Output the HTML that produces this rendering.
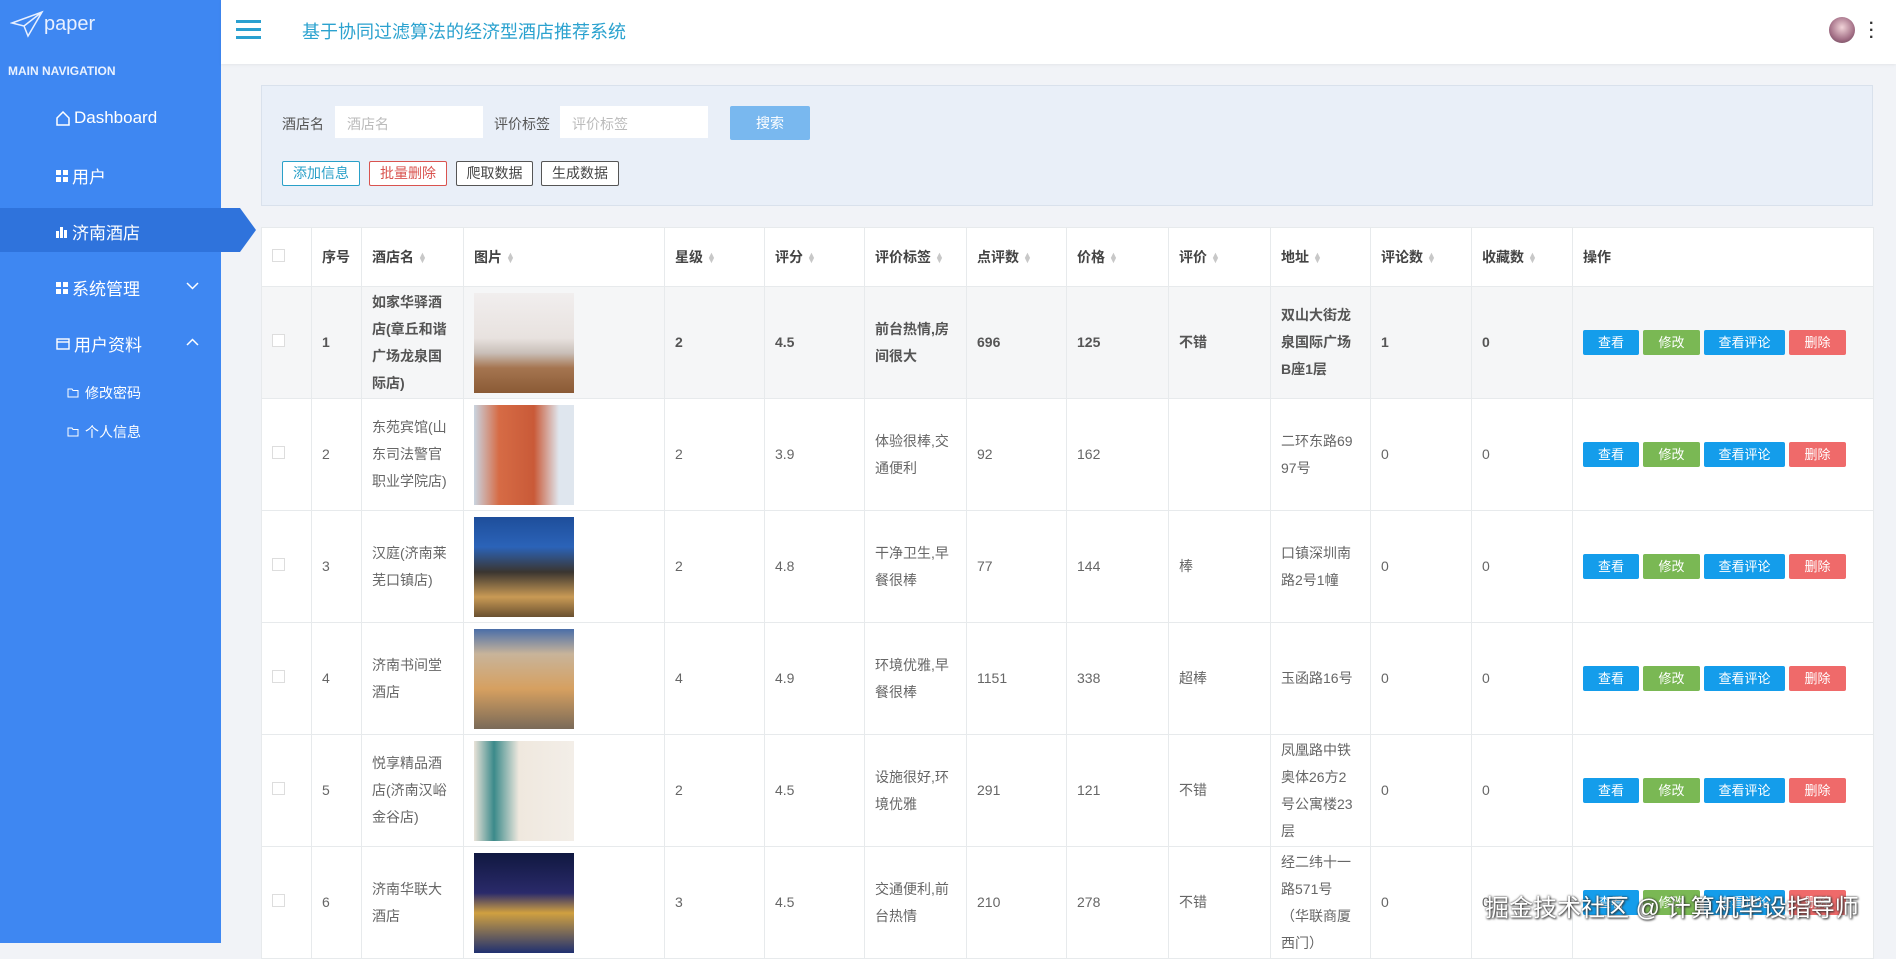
<!DOCTYPE html>
<html><head><meta charset="utf-8"><style>
*{margin:0;padding:0;box-sizing:border-box}
body{width:1896px;height:943px;overflow:hidden;background:#f1f3f7;font-family:"Liberation Sans","Noto Sans CJK SC",sans-serif;color:#555;position:relative}
.side{position:absolute;left:0;top:0;width:221px;height:943px;background:#3e87f2;color:#fff}
.logo{position:absolute;left:10px;top:10px;font-size:22px;color:#e8f0ff;display:flex;align-items:center}
.mn{position:absolute;left:8px;top:64px;font-size:12px;font-weight:bold;color:#eaf2ff}
.it{position:absolute;left:56px;font-size:17px;color:#fff;display:flex;align-items:center;gap:4px}
.act{position:absolute;left:0;top:208px;width:240px;height:44px;background:#2f73dc}
.act:after{content:"";position:absolute;right:-16px;top:0;border-left:16px solid #2f73dc;border-top:22px solid transparent;border-bottom:22px solid transparent}
.sub{position:absolute;left:67px;font-size:14px;color:#fff;display:flex;align-items:center;gap:6px}
.hdr{position:absolute;left:221px;top:0;right:0;height:64px;background:#fff;box-shadow:0 1px 3px rgba(0,0,0,.06)}
.ham{position:absolute;left:15px;top:20px;width:25px}
.ham i{display:block;height:3px;background:#2aa0d0;margin-bottom:5px}
.title{position:absolute;left:81px;top:18px;font-size:18px;color:#2ba2cf}
.av{position:absolute;left:1608px;top:17px;width:26px;height:26px;border-radius:50%;background:radial-gradient(circle at 50% 40%,#f1d3d8,#a36f86 60%,#5b3a4c)}
.dots{position:absolute;left:1648px;top:20px;font-size:16px;color:#333;line-height:7px;font-weight:bold}
.panel{position:absolute;left:261px;top:85px;width:1612px;height:121px;background:#e9eff8;border:1px solid #d9e1ec}
.lbl{position:absolute;font-size:14px;color:#555}
.inp{position:absolute;background:#fff;height:32px;font-size:14px;color:#bbb;padding:8px 12px}
.sbtn{position:absolute;left:468px;top:20px;width:80px;height:34px;background:#79b8ef;color:#fff;font-size:14px;text-align:center;line-height:34px;border-radius:2px}
.ob{position:absolute;top:75px;height:25px;font-size:14px;line-height:23px;text-align:center;background:#fff;border:1px solid;border-radius:2px}
table{position:absolute;left:261px;top:227px;width:1612px;border-collapse:collapse;table-layout:fixed;background:#fff;font-size:14px}
td,th{border:1px solid #e7eaec;padding:0 10px;text-align:left;vertical-align:middle;line-height:27px;color:#666;word-break:break-all}
th{height:59px;font-weight:bold;color:#444}
tr.r td{height:112px}
tr.hl td{background:#f5f6f7;font-weight:bold;color:#555}
.s{display:inline-block;margin-left:4px;color:#c8c8c8;font-size:9px;line-height:5px;vertical-align:middle}
.cb{display:inline-block;width:13px;height:13px;border:1px solid #ddd;background:#fff}
.img{width:100px;height:100px;margin-left:0}
.b{display:inline-block;height:25px;line-height:25px;color:#fff;font-size:13px;text-align:center;border-radius:2px;margin-right:4px;font-weight:normal}
.v{background:#149deb;width:56px}.e{background:#7ab854;width:57px}.c{background:#149deb;width:81px}.d{background:#ef6a6a;width:57px}
.wm{position:absolute;left:1485px;top:888px;font-size:24px;color:#fff;text-shadow:0 0 2px #333,1px 1px 2px #333;white-space:nowrap}
</style></head><body>
<div class="side">
 <div class="logo"><svg width="34" height="28" viewBox="0 0 34 28" fill="none" stroke="#e8f0ff" stroke-width="1.5"><path d="M2 13 L32 2 L18 26 L14 16 Z M14 16 L32 2"/></svg><span style="font-size:20px">paper</span></div>
 <div class="mn">MAIN NAVIGATION</div>
 <div class="it" style="top:108px"><svg width="14" height="15" viewBox="0 0 14 15" fill="none" stroke="#fff" stroke-width="1.5"><path d="M1 7 L7 1 L13 7 V14 H1 Z"/></svg>Dashboard</div>
 <div class="it" style="top:163px"><svg width="12" height="12" viewBox="0 0 12 12" fill="#fff"><rect width="5" height="5"/><rect x="7" width="5" height="5"/><rect y="7" width="5" height="5"/><rect x="7" y="7" width="5" height="5"/></svg>用户</div>
 <div class="act"></div>
 <div class="it" style="top:219px"><svg width="12" height="12" viewBox="0 0 12 12" fill="#fff"><rect y="5" width="3" height="7"/><rect x="4" y="1" width="3" height="11"/><rect x="8" y="4" width="3" height="8"/></svg>济南酒店</div>
 <div class="it" style="top:275px"><svg width="12" height="12" viewBox="0 0 12 12" fill="#fff"><rect width="5" height="5"/><rect x="7" width="5" height="5"/><rect y="7" width="5" height="5"/><rect x="7" y="7" width="5" height="5"/></svg>系统管理</div>
 <svg style="position:absolute;left:186px;top:282px" width="13" height="8" viewBox="0 0 13 8" fill="none" stroke="#fff" stroke-width="1.5"><path d="M1 1 L6.5 6.5 L12 1"/></svg>
 <div class="it" style="top:331px"><svg width="14" height="12" viewBox="0 0 14 12" fill="none" stroke="#fff" stroke-width="1.4"><rect x="1" y="1" width="12" height="10"/><path d="M1 4 H13"/></svg>用户资料</div>
 <svg style="position:absolute;left:186px;top:338px" width="13" height="8" viewBox="0 0 13 8" fill="none" stroke="#fff" stroke-width="1.5"><path d="M1 7 L6.5 1.5 L12 7"/></svg>
 <div class="sub" style="top:383px"><svg width="12" height="10" viewBox="0 0 12 10" fill="none" stroke="#fff"><path d="M1 1 H5 L6 2.5 H11 V9 H1 Z"/></svg>修改密码</div>
 <div class="sub" style="top:422px"><svg width="12" height="10" viewBox="0 0 12 10" fill="none" stroke="#fff"><path d="M1 1 H5 L6 2.5 H11 V9 H1 Z"/></svg>个人信息</div>
</div>
<div class="hdr"><div class="ham"><i></i><i></i><i></i></div><div class="title">基于协同过滤算法的经济型酒店推荐系统</div><div class="av"></div><div class="dots">·<br>·<br>·</div></div>
<div class="panel">
 <div class="lbl" style="left:20px;top:28px">酒店名</div>
 <div class="inp" style="left:73px;top:20px;width:148px">酒店名</div>
 <div class="lbl" style="left:232px;top:28px">评价标签</div>
 <div class="inp" style="left:298px;top:20px;width:148px">评价标签</div>
 <div class="sbtn">搜索</div>
 <div class="ob" style="left:20px;width:78px;color:#2aa0c8;border-color:#2aa0c8">添加信息</div>
 <div class="ob" style="left:107px;width:78px;color:#d9534f;border-color:#d9534f">批量删除</div>
 <div class="ob" style="left:194px;width:77px;color:#444;border-color:#555">爬取数据</div>
 <div class="ob" style="left:279px;width:78px;color:#444;border-color:#555">生成数据</div>
</div>
<table>
<colgroup><col style="width:50px"><col style="width:50px"><col style="width:102px"><col style="width:201px"><col style="width:100px"><col style="width:100px"><col style="width:102px"><col style="width:100px"><col style="width:102px"><col style="width:102px"><col style="width:100px"><col style="width:101px"><col style="width:101px"><col style="width:301px"></colgroup>
<tr><th style="padding-left:10px"><span class="cb"></span></th><th>序号</th><th>酒店名<span class="s">▲<br>▼</span></th><th>图片<span class="s">▲<br>▼</span></th><th>星级<span class="s">▲<br>▼</span></th><th>评分<span class="s">▲<br>▼</span></th><th>评价标签<span class="s">▲<br>▼</span></th><th>点评数<span class="s">▲<br>▼</span></th><th>价格<span class="s">▲<br>▼</span></th><th>评价<span class="s">▲<br>▼</span></th><th>地址<span class="s">▲<br>▼</span></th><th>评论数<span class="s">▲<br>▼</span></th><th>收藏数<span class="s">▲<br>▼</span></th><th>操作</th></tr>
<tr class="r hl"><td><span class="cb"></span></td><td>1</td><td>如家华驿酒店(章丘和谐广场龙泉国际店)</td><td><div class="img" style="background:linear-gradient(180deg,#f1eeee 0%,#e8e2df 45%,#c9bfb8 60%,#a57550 75%,#8a5a35 100%)"></div></td><td>2</td><td>4.5</td><td>前台热情,房间很大</td><td>696</td><td>125</td><td>不错</td><td>双山大街龙泉国际广场B座1层</td><td>1</td><td>0</td><td><span class="b v">查看</span><span class="b e">修改</span><span class="b c">查看评论</span><span class="b d">删除</span></td></tr>
<tr class="r"><td><span class="cb"></span></td><td>2</td><td>东苑宾馆(山东司法警官职业学院店)</td><td><div class="img" style="background:linear-gradient(90deg,#c9d4e0 0%,#d66b45 25%,#c95a38 60%,#dfe6ee 85%)"></div></td><td>2</td><td>3.9</td><td>体验很棒,交通便利</td><td>92</td><td>162</td><td></td><td>二环东路6997号</td><td>0</td><td>0</td><td><span class="b v">查看</span><span class="b e">修改</span><span class="b c">查看评论</span><span class="b d">删除</span></td></tr>
<tr class="r"><td><span class="cb"></span></td><td>3</td><td>汉庭(济南莱芜口镇店)</td><td><div class="img" style="background:linear-gradient(180deg,#1e4e9a 0%,#2b63b8 30%,#3a3530 55%,#c99a55 80%,#6a5030 100%)"></div></td><td>2</td><td>4.8</td><td>干净卫生,早餐很棒</td><td>77</td><td>144</td><td>棒</td><td>口镇深圳南路2号1幢</td><td>0</td><td>0</td><td><span class="b v">查看</span><span class="b e">修改</span><span class="b c">查看评论</span><span class="b d">删除</span></td></tr>
<tr class="r"><td><span class="cb"></span></td><td>4</td><td>济南书间堂酒店</td><td><div class="img" style="background:linear-gradient(180deg,#4a6ea8 0%,#c8b49a 25%,#d6a060 60%,#7a6a58 100%)"></div></td><td>4</td><td>4.9</td><td>环境优雅,早餐很棒</td><td>1151</td><td>338</td><td>超棒</td><td>玉函路16号</td><td>0</td><td>0</td><td><span class="b v">查看</span><span class="b e">修改</span><span class="b c">查看评论</span><span class="b d">删除</span></td></tr>
<tr class="r"><td><span class="cb"></span></td><td>5</td><td>悦享精品酒店(济南汉峪金谷店)</td><td><div class="img" style="background:linear-gradient(90deg,#e9e2d8 0%,#3b8a8a 20%,#efe8de 45%,#f3eee8 100%)"></div></td><td>2</td><td>4.5</td><td>设施很好,环境优雅</td><td>291</td><td>121</td><td>不错</td><td>凤凰路中铁奥体26方2号公寓楼23层</td><td>0</td><td>0</td><td><span class="b v">查看</span><span class="b e">修改</span><span class="b c">查看评论</span><span class="b d">删除</span></td></tr>
<tr class="r"><td><span class="cb"></span></td><td>6</td><td>济南华联大酒店</td><td><div class="img" style="background:linear-gradient(180deg,#101840 0%,#2a2a6a 40%,#d0a040 60%,#203070 100%)"></div></td><td>3</td><td>4.5</td><td>交通便利,前台热情</td><td>210</td><td>278</td><td>不错</td><td>经二纬十一路571号（华联商厦西门）</td><td>0</td><td>0</td><td><span class="b v">查看</span><span class="b e">修改</span><span class="b c">查看评论</span><span class="b d">删除</span></td></tr>
</table>
<div class="wm">掘金技术社区 @ 计算机毕设指导师</div>
</body></html>
